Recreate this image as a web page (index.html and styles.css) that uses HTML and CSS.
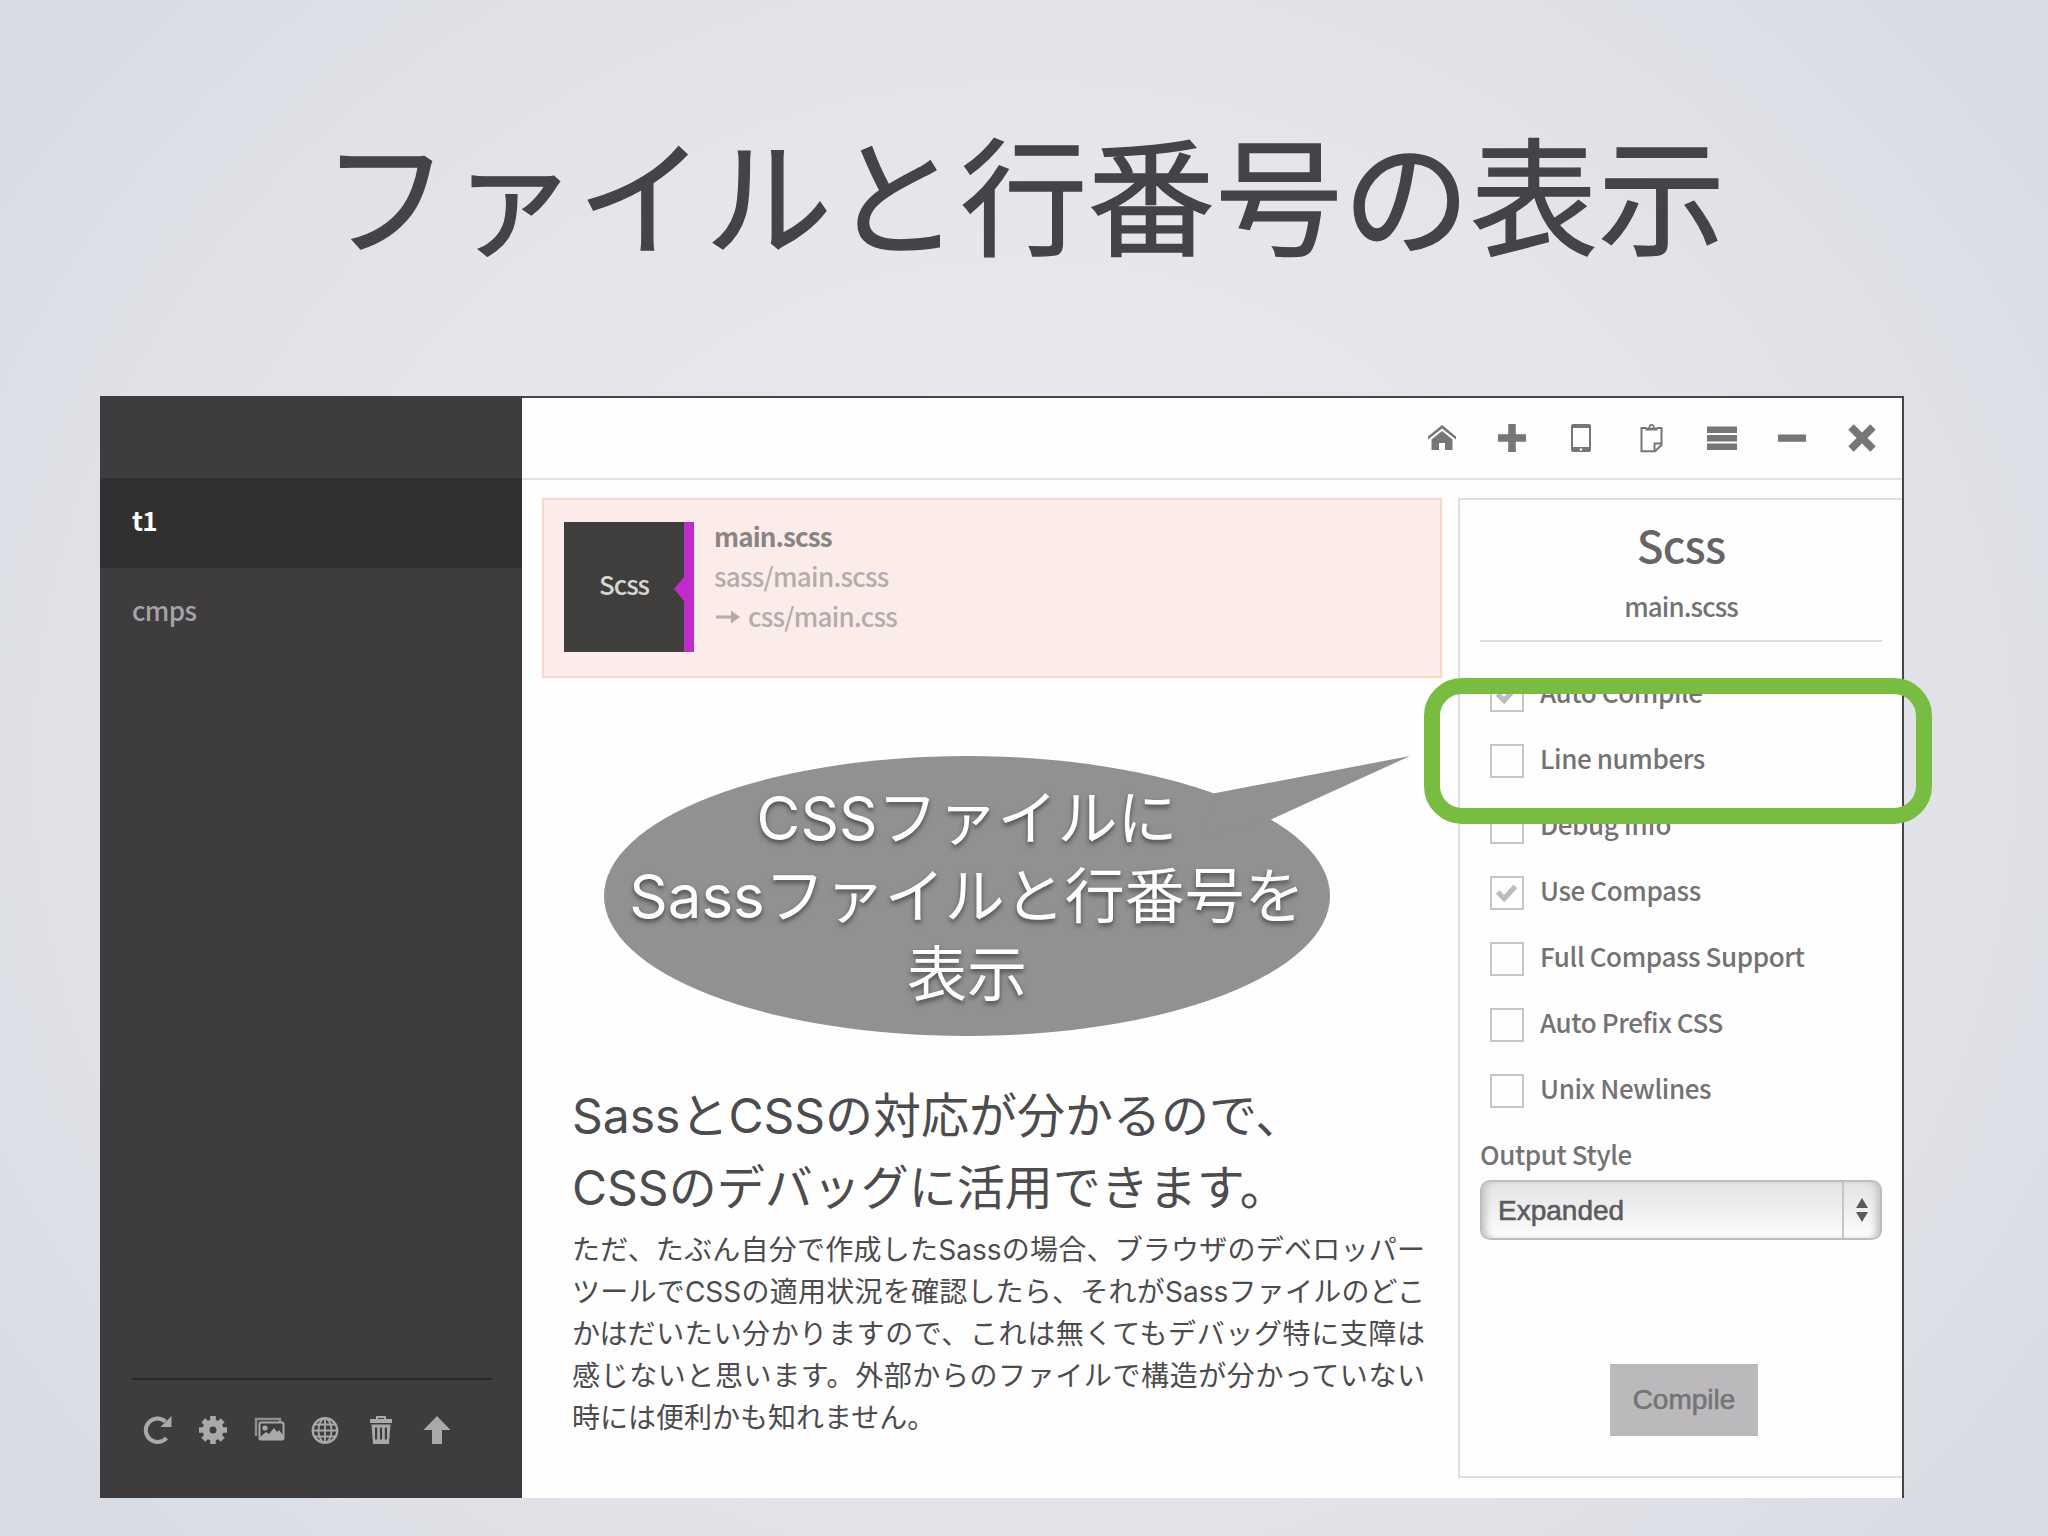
FILE: index.html
```html
<!DOCTYPE html>
<html lang="ja">
<head>
    <meta charset="UTF-8">
    <meta name="viewport" content="width=device-width, initial-scale=1.0">
    <title>ファイルと行番号の表示</title>
    <link rel="stylesheet" href="styles.css">
</head>
<body>
    <div class="slide">
        <h1>ファイルと行番号の表示</h1>

        <div class="window">
            <aside class="sidebar">
                <ul class="projects">
                    <li class="active">t1</li>
                    <li>cmps</li>
                </ul>
                <div class="tools">
                    <svg viewBox="0 0 28 28"><path d="M23.500 22A11.800 11.800 0 1 1 22.500 5.500" fill="none" stroke="currentColor" stroke-width="4"/><path d="M28.500 0v11H17.500z"/></svg>
                    <svg viewBox="0 0 28 28"><circle cx="14" cy="14" r="7" fill="none" stroke="currentColor" stroke-width="7"/><g stroke="currentColor" stroke-width="5.600"><path d="M14 0v6M14 22v6M0 14h6M22 14h6M4.300 4.300l4 4M19.700 19.700l4 4M4.300 23.700l4-4M19.700 8.300l4-4"/></g></svg>
                    <svg viewBox="0 0 28 28"><path d="M1 20V3h24v3" fill="none" stroke="currentColor" stroke-width="2.400" opacity=".75"/><rect x="4.500" y="6.500" width="24" height="17" rx="1.500" fill="none" stroke="currentColor" stroke-width="2"/><circle cx="10" cy="12" r="2.600"/><path d="M5 23v-2l6-5 3 2 5-6 3 4 2-2 4 5v4z"/></svg>
                    <svg viewBox="0 0 28 28"><g fill="none" stroke="currentColor" stroke-width="1.800"><circle cx="14" cy="14.500" r="12.200" stroke-width="2.400"/><ellipse cx="14" cy="14.500" rx="6.500" ry="12"/><path d="M14 2v25M2 14.500h24M4 8.500h20M4 20.500h20"/></g></svg>
                    <svg viewBox="0 0 28 28"><path d="M3 3h6V0h10v3h6v4H3zM11 2v1h6V2z" fill-rule="evenodd"/><path d="M4.500 8.500h19l-1.500 19.500H6zM8 11.500v12h2.200v-12zM12.900 11.500v12h2.200v-12zM17.800 11.500v12H20v-12z" fill-rule="evenodd"/></svg>
                    <svg viewBox="0 0 28 28"><path d="M14 0l13.500 14H19v14H9V14H.5z"/></svg>
                </div>
            </aside>

            <div class="main">
                <div class="toolbar">
                    <svg viewBox="0 0 28 28"><path d="M14 1l14 11.500v3L14 4.500 0 15.500v-3z"/><path d="M14 7l10.500 8.500V26H17v-7h-6v7H3.500V15.500z"/></svg>
                    <svg viewBox="0 0 28 28"><path d="M10.200 0h7.600v10.200H28v7.600H17.800V28h-7.600V17.800H0v-7.600h10.200z"/></svg>
                    <svg viewBox="0 0 28 28"><path d="M5 0h16q2 0 2 2v24q0 2-2 2H5q-2 0-2-2V2q0-2 2-2zM5 4v19h16V4zM11.700 24.500v2h2.500v-2z" fill-rule="evenodd"/></svg>
                    <svg viewBox="0 0 28 28"><path d="M8 4H3.500v23.200H17L23.500 21V4H19M16.500 27v-7.500h7" fill="none" stroke="currentColor" stroke-width="2"/><path d="M7.500 6.500V3.500h3q0-3.500 3-3.500t3 3.500h3v3zM12.300 2v1.800h2.400V2z" fill-rule="evenodd"/></svg>
                    <svg viewBox="0 0 28 28"><path d="M-1 2.500h30v6.500H-1zM-1 11h30v6.500H-1zM-1 19.500h30V26H-1z"/></svg>
                    <svg viewBox="0 0 28 28"><path d="M0 10.500h28v7.300H0z"/></svg>
                    <svg viewBox="0 0 28 28"><path d="M3 3l22 22M25 3L3 25" fill="none" stroke="currentColor" stroke-width="7.600"/></svg>
                </div>

                <div class="content">
                    <div class="files">
                        <div class="file">
                            <div class="file-type">Scss</div>
                            <div class="file-info">
                                <strong>main.scss</strong>
                                <span>sass/main.scss</span>
                                <span class="output"><svg viewBox="0 0 24 14"><path d="M0 7h18" stroke="currentColor" stroke-width="3"/><path d="M15 .5L24 7l-9 6.500z"/></svg>css/main.css</span>
                            </div>
                        </div>

                        <div class="note">
                            <h2>SassとCSSの対応が分かるので、<br>CSSのデバッグに活用できます。</h2>
                            <p>
                                <span>ただ、たぶん自分で作成したSassの場合、ブラウザのデベロッパー</span>
                                <span>ツールでCSSの適用状況を確認したら、それがSassファイルのどこ</span>
                                <span>かはだいたい分かりますので、これは無くてもデバッグ特に支障は</span>
                                <span>感じないと思います。外部からのファイルで構造が分かっていない</span>
                                <span class="last">時には便利かも知れません。</span>
                            </p>
                        </div>
                    </div>

                    <div class="panel">
                        <h3>Scss</h3>
                        <div class="panel-file">main.scss</div>
                        <div class="options">
                            <div class="option"><i class="box"><svg viewBox="0 0 30 30"><path d="M6 15l7 7L25 9" /></svg></i>Auto Compile</div>
                            <div class="option"><i class="box"></i>Line numbers</div>
                            <div class="option"><i class="box"></i>Debug Info</div>
                            <div class="option"><i class="box"><svg viewBox="0 0 30 30"><path d="M6 15l7 7L25 9" /></svg></i>Use Compass</div>
                            <div class="option"><i class="box"></i>Full Compass Support</div>
                            <div class="option"><i class="box"></i>Auto Prefix CSS</div>
                            <div class="option"><i class="box"></i>Unix Newlines</div>
                        </div>
                        <div class="style-label">Output Style</div>
                        <div class="select">
                            <span>Expanded</span>
                            <div class="arrows"><i class="up"></i><i class="down"></i></div>
                        </div>
                        <div class="compile">Compile</div>
                    </div>
                </div>
            </div>
        </div>

        <!-- annotations over the app window -->
        <div class="callout">
            <svg viewBox="0 0 806 280"><ellipse cx="363" cy="140" rx="363" ry="140"/><path d="M609 37.500L806 0 667 63.500 600 80z"/></svg>
            <p>CSSファイルに<br>Sassファイルと行番号を<br>表示</p>
        </div>
        <div class="highlight"></div>
    </div>
</body>
</html>
```
FILE: styles.css
```css
* {
    margin: 0;
    padding: 0;
    box-sizing: border-box;
}
body {
    width: 2048px;
    height: 1536px;
    overflow: hidden;
    font-family: 'Inter', 'Noto Sans CJK JP', sans-serif;
    color: #4c4b4e;
}
.slide {
    position: relative;
    width: 2048px;
    height: 1536px;
    background: radial-gradient(ellipse 62% 75% at 50% 50%, #eaeaee 0%, #e5e6eb 55%, #dfe1e7 78%, #d8dce2 100%);
}
h1 {
    height: 396px;
    line-height: 401px;
    font-size: 127px;
    font-weight: 400;
    letter-spacing: 0.6px;
    text-align: center;
    color: #434446;
    -webkit-text-stroke: 1.4px #434446;
}
svg {
    fill: currentColor;
    overflow: visible;
    flex: none;
}

/* app window */
.window {
    display: flex;
    width: 1804px;
    height: 1102px;
    margin-left: 100px;
    background: #fefefe;
    border-top: 2px solid #444648;
    border-right: 2px solid #444648;
    font-family: 'Noto Sans CJK JP', sans-serif;
}
.sidebar {
    display: flex;
    flex-direction: column;
    width: 422px;
    margin-top: -2px;
    padding-top: 82px;
    background: #3f3c3f;
}
.projects {
    list-style: none;
    flex: 1;
}
.projects li {
    height: 90px;
    padding-left: 32px;
    line-height: 84px;
    font-size: 26px;
    font-weight: 500;
    letter-spacing: -0.6px;
    color: #a5a3a5;
}
.projects .active {
    background: #322f32;
    color: #fff;
    font-weight: 700;
}
.tools {
    display: flex;
    gap: 28px;
    height: 120px;
    margin: 0 30px 0 32px;
    padding: 36px 0 0 11px;
    border-top: 2px solid #2a282a;
    color: #aaa8aa;
}
.tools svg {
    width: 28px;
    height: 28px;
}
.main {
    flex: 1;
    display: flex;
    flex-direction: column;
}
.toolbar {
    display: flex;
    justify-content: flex-end;
    gap: 42px;
    height: 82px;
    padding: 26px 26px 0 0;
    border-bottom: 2px solid #e4e1e5;
    color: #777578;
}
.toolbar svg {
    width: 28px;
    height: 28px;
}
.content {
    flex: 1;
    display: flex;
    gap: 16px;
    padding: 18px 0 20px 20px;
}
.files {
    width: 900px;
}
.file {
    display: flex;
    height: 180px;
    padding: 22px 20px;
    background: #fbece9;
    border: 2px solid #fbd5c5;
}
.file-type {
    position: relative;
    width: 130px;
    height: 130px;
    border-right: 10px solid #be2cc9;
    background: #403e3c;
    color: #d5d5d5;
    font-size: 26px;
    font-weight: 500;
    line-height: 124px;
    text-align: center;
    letter-spacing: -1px;
}
.file-type::after {
    content: '';
    position: absolute;
    right: 0;
    top: 55px;
    border: 12px solid transparent;
    border-left: 0;
    border-right: 10px solid #be2cc9;
}
.file-info {
    display: flex;
    flex-direction: column;
    margin: -6px 0 0 20px;
    font-size: 26px;
    line-height: 40px;
    font-weight: 500;
    letter-spacing: -0.7px;
    color: #b3acab;
}
.file-info strong {
    color: #898585;
    letter-spacing: -0.9px;
}
.output svg {
    width: 24px;
    height: 14px;
    margin: 0 8px 3px 2px;
}

.note {
    width: 853px;
    margin: 402px 0 0 30px;
    font-family: 'Inter', 'Noto Sans CJK JP', sans-serif;
}
.note h2 {
    font-size: 48px;
    line-height: 72px;
    font-weight: 400;
}
.note p {
    margin-top: 5px;
    font-size: 28px;
    line-height: 42px;
}
.note span {
    display: block;
    white-space: nowrap;
    text-align: justify;
    text-align-last: justify;
}
.note .last {
    text-align-last: left;
}

/* settings panel */
.panel {
    flex: 1;
    display: flex;
    flex-direction: column;
    padding: 0 20px;
    border: 2px solid #e0dde1;
    border-right: 0;
    font-size: 26px;
    font-weight: 500;
    letter-spacing: -0.4px;
    color: #747274;
}
.panel h3 {
    margin-top: 8px;
    line-height: 72px;
    font-size: 44px;
    font-weight: 500;
    letter-spacing: -0.8px;
    text-align: center;
    color: #666466;
}
.panel-file {
    height: 62px;
    line-height: 52px;
    letter-spacing: -0.9px;
    border-bottom: 2px solid #dfdcdf;
    text-align: center;
}
.options {
    display: flex;
    flex-direction: column;
    gap: 32px;
    padding: 36px 0 0 10px;
}
.option {
    display: flex;
    gap: 16px;
    height: 34px;
    line-height: 28px;
    white-space: nowrap;
}
.box {
    width: 34px;
    height: 34px;
    border: 2px solid #c8c5c8;
}
.box svg {
    display: block;
    width: 28px;
    height: 28px;
    fill: none;
    stroke: #bdbbbe;
    stroke-width: 5.5px;
}
.style-label {
    margin-top: 26px;
    line-height: 40px;
}
.select {
    display: flex;
    justify-content: space-between;
    height: 60px;
    margin-top: 6px;
    padding-left: 16px;
    border: 2px solid #bfbdc0;
    border-radius: 10px;
    background: linear-gradient(#e4e2e4, #fdfdfd);
    box-shadow: inset 7px 0 6px -3px #c6c4c7, inset -7px 0 6px -3px #c6c4c7;
    font: 28px/57px 'Liberation Sans', sans-serif;
    letter-spacing: 0;
    color: #5d5b5e;
    -webkit-text-stroke: 0.6px #5d5b5e;
}
.arrows {
    display: flex;
    flex-direction: column;
    justify-content: center;
    align-items: center;
    gap: 4px;
    width: 38px;
    border-left: 2px solid #c6c4c6;
}
.up,
.down {
    border: 6px solid transparent;
}
.up {
    border-top: 0;
    border-bottom: 10px solid #5b595c;
}
.down {
    border-bottom: 0;
    border-top: 10px solid #5b595c;
}
.compile {
    width: 148px;
    height: 72px;
    margin: 124px 0 0 130px;
    background: #bbb9bc;
    font: 28px/72px 'Liberation Sans', sans-serif;
    letter-spacing: 0;
    text-align: center;
    color: #757476;
    -webkit-text-stroke: 0.6px #757476;
}

.callout {
    position: absolute;
    left: 604px;
    top: 756px;
    width: 726px;
    height: 280px;
    padding-top: 23px;
    color: #929093;
}
.callout svg {
    position: absolute;
    left: 0;
    top: 0;
    width: 806px;
    height: 280px;
}
.callout p {
    position: relative;
    font-size: 60px;
    line-height: 78px;
    text-align: center;
    white-space: nowrap;
    color: #fff;
    text-shadow: 0 3px 5px rgba(0, 0, 0, 0.5);
}
.highlight {
    position: absolute;
    left: 1424px;
    top: 678px;
    width: 508px;
    height: 146px;
    border: 16px solid #78bc42;
    border-radius: 38px;
}
```
